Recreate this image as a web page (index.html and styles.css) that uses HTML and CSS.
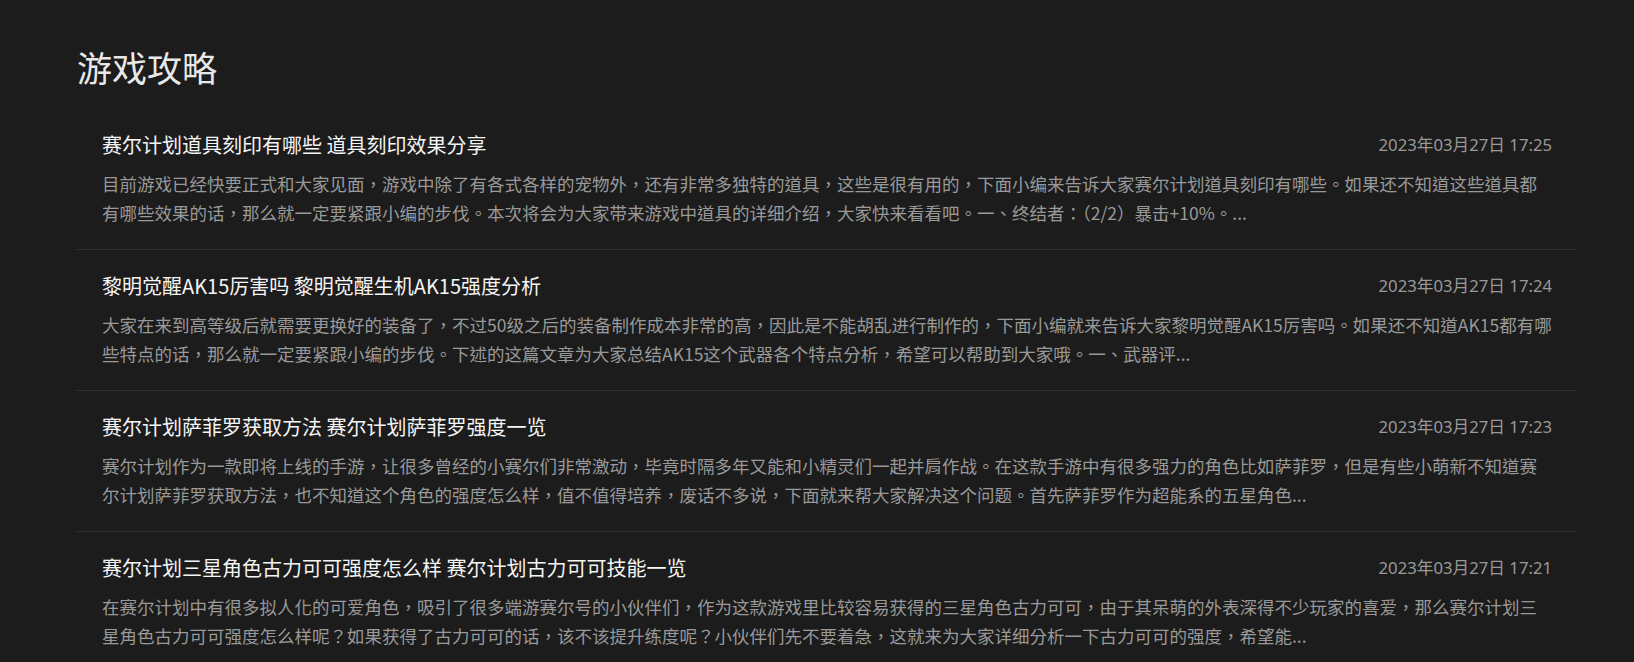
FILE: index.html
```html
<!DOCTYPE html>
<html lang="zh-CN">
<head>
<meta charset="utf-8">
<title>游戏攻略</title>
<link rel="stylesheet" href="styles.css">
</head>
<body>
<main class="page">
  <h2 class="page-title">游戏攻略</h2>
  <ul class="list">
    <li class="item">
      <div class="item-head">
        <a class="item-title">赛尔计划道具刻印有哪些 道具刻印效果分享</a>
        <span class="item-date">2023年03月27日 17:25</span>
      </div>
      <p class="item-desc" lang="zh-Hant">目前游戏已经快要正式和大家见面，游戏中除了有各式各样的宠物外，还有非常多独特的道具，这些是很有用的，下面小编来告诉大家赛尔计划道具刻印有哪些。如果还不知道这些道具都有哪些效果的话，那么就一定要紧跟小编的步伐。本次将会为大家带来游戏中道具的详细介绍，大家快来看看吧。一、终结者：（2/2）暴击+10%。...</p>
    </li>
    <li class="item">
      <div class="item-head">
        <a class="item-title">黎明觉醒AK15厉害吗 黎明觉醒生机AK15强度分析</a>
        <span class="item-date">2023年03月27日 17:24</span>
      </div>
      <p class="item-desc" lang="zh-Hant">大家在来到高等级后就需要更换好的装备了，不过50级之后的装备制作成本非常的高，因此是不能胡乱进行制作的，下面小编就来告诉大家黎明觉醒AK15厉害吗。如果还不知道AK15都有哪些特点的话，那么就一定要紧跟小编的步伐。下述的这篇文章为大家总结AK15这个武器各个特点分析，希望可以帮助到大家哦。一、武器评...</p>
    </li>
    <li class="item">
      <div class="item-head">
        <a class="item-title">赛尔计划萨菲罗获取方法 赛尔计划萨菲罗强度一览</a>
        <span class="item-date">2023年03月27日 17:23</span>
      </div>
      <p class="item-desc" lang="zh-Hant">赛尔计划作为一款即将上线的手游，让很多曾经的小赛尔们非常激动，毕竟时隔多年又能和小精灵们一起并肩作战。在这款手游中有很多强力的角色比如萨菲罗，但是有些小萌新不知道赛尔计划萨菲罗获取方法，也不知道这个角色的强度怎么样，值不值得培养，废话不多说，下面就来帮大家解决这个问题。首先萨菲罗作为超能系的五星角色...</p>
    </li>
    <li class="item">
      <div class="item-head">
        <a class="item-title">赛尔计划三星角色古力可可强度怎么样 赛尔计划古力可可技能一览</a>
        <span class="item-date">2023年03月27日 17:21</span>
      </div>
      <p class="item-desc" lang="zh-Hant">在赛尔计划中有很多拟人化的可爱角色，吸引了很多端游赛尔号的小伙伴们，作为这款游戏里比较容易获得的三星角色古力可可，由于其呆萌的外表深得不少玩家的喜爱，那么赛尔计划三星角色古力可可强度怎么样呢？如果获得了古力可可的话，该不该提升练度呢？小伙伴们先不要着急，这就来为大家详细分析一下古力可可的强度，希望能...</p>
    </li>
  </ul>
</main>
</body>
</html>
```

FILE: styles.css
```css
html, body {
  margin: 0;
  padding: 0;
  background: #1c1c1c;
}

body {
  font-family: "Noto Sans", "Noto Sans CJK SC", sans-serif;
  color: #999;
}

.page {
  width: 1500px;
  margin-left: 77px;
  padding-top: 48px;
}

.page-title {
  margin: 0 0 19px 0;
  font-size: 35px;
  line-height: 42px;
  font-weight: 400;
  color: #e8e8e8;
}

.list {
  list-style: none;
  margin: 0;
  padding: 0;
}

.item {
  padding: 22px 25px 22px 25px;
  border-bottom: 1px solid #333;
}

.item-head {
  display: flex;
  justify-content: space-between;
  align-items: center;
  height: 28px;
}

.item-title {
  font-family: "Noto Sans CJK SC", sans-serif;
  font-size: 20px;
  line-height: 28px;
  color: #f5f5f5;
  text-decoration: none;
}

.item-date {
  font-size: 16.7px;
  line-height: 28px;
  color: #999;
}

.item-desc {
  margin: 10px 0 0 0;
  font-family: "Noto Sans CJK TC", "Noto Sans CJK SC", sans-serif;
  font-size: 17.5px;
  line-height: 29px;
  color: #999;
}
```
